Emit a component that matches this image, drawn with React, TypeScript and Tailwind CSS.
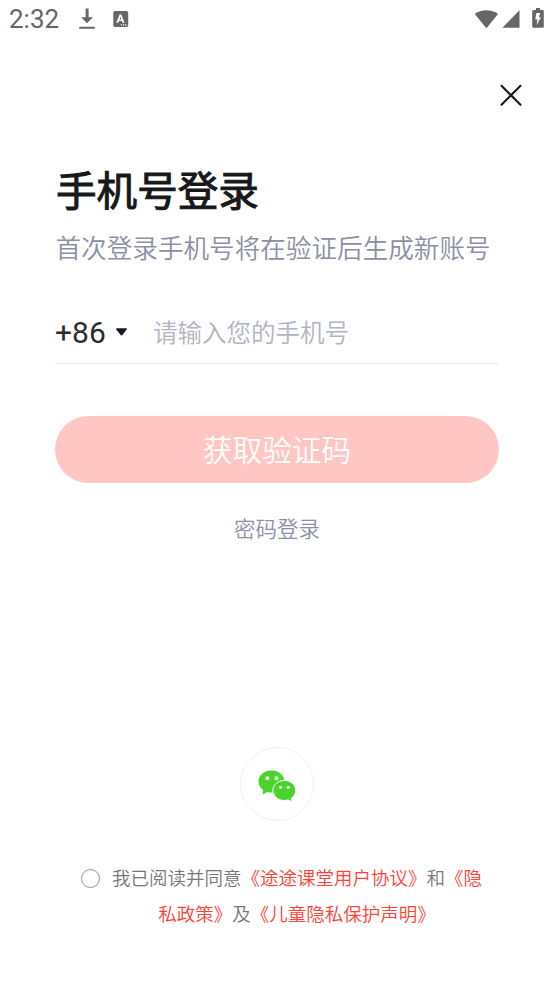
import React from "react";

function StatusBar() {
  return (
    <header className="flex h-[38px] items-center text-[#666666]">
      <span className="ml-[9px] w-[51px] font-[Roboto,sans-serif] text-[26px] leading-[38px] whitespace-nowrap">2:32</span>
      <svg className="ml-[19px] h-[22px] w-[16px]" viewBox="0 0 16 22" fill="currentColor">
        <path d="M6.600.5h3v8.800h4.300L8 15.300 2.100 9.300h4.500zM.2 18.700h15.600v2H.2z" />
      </svg>
      <svg className="ml-[18px] h-[16px] w-[16px]" viewBox="0 0 16 16" fill="currentColor">
        <path
          fillRule="evenodd"
          d="M2 0h11.5a1.7 1.7 0 0 1 1.7 1.7v12.5a1.7 1.7 0 0 1-1.7 1.7H2a1.7 1.7 0 0 1-1.7-1.7V1.700A1.700 1.700 0 0 1 2 0zM6.600 3.500 3.300 11.700h2l.6-1.600h3l.6 1.600h2L8.300 3.500zM6.500 8.500l.95-2.700 1 2.700zM7.800 13.300v1.100H9v-1.100zm2.200 0v1.100h1.200v-1.100zm2.200 0v1.100h1.200v-1.100z"
        />
      </svg>
      <svg className="ml-auto h-[19px] w-[24px]" viewBox="0 0 24 19" fill="currentColor">
        <path d="M.8 3.900C7.500-.9 17.300-.9 24 3.900L12.400 18.200z" />
      </svg>
      <svg className="ml-[4px] h-[18px] w-[18px]" viewBox="0 0 18 18" fill="currentColor">
        <path d="M17.500.3v17.400H.3z" />
      </svg>
      <svg className="mr-[10px] mb-[2px] ml-[12px] h-[20px] w-[12px]" viewBox="0 0 12 20" fill="currentColor">
        <path fillRule="evenodd" d="M4 0h4v2h2.500A1.300 1.300 0 0 1 11.800 3.300v15.200a1.300 1.300 0 0 1-1.300 1.300h-9A1.300 1.300 0 0 1 .2 18.500V3.300A1.300 1.300 0 0 1 1.500 2H4zM4.300 5l-1 6.600h2.200l-.9 5.700L9 9.300H6.900L8.300 5z" />
      </svg>
    </header>
  );
}

function WeChatIcon() {
  return (
    <svg className="mt-[3px] h-[32px] w-[38px]" viewBox="0 0 38 32">
      <path fill="#4bd52c" d="M13.500.5C6.300.5.5 5.400.5 11.500c0 3.500 1.900 6.400 4.700 8.400L4.700 24.500l4.500-2.600c1.400.4 2.800.6 4.300.6 7.200 0 13-4.900 13-11S20.700.5 13.500.5z" />
      <path fill="#4bd52c" stroke="#fff" strokeWidth="1" d="M26.300 10.400c-6.400 0-11.400 4.400-11.400 10s5 10.100 11.400 10.100c1.300 0 2.600-.2 3.700-.6l4.200 2.100-.9-3.600c2.700-1.800 4.400-4.700 4.400-8 0-5.600-5-10-11.400-10z" />
      <g fill="#fff">
        <circle cx="9.400" cy="8.200" r="1.900" />
        <circle cx="18.500" cy="8.200" r="1.900" />
        <circle cx="22.700" cy="17.300" r="1.500" />
        <circle cx="30.200" cy="17.300" r="1.500" />
      </g>
    </svg>
  );
}

export default function App() {
  return (
    <div lang="zh-CN" className="flex h-[984px] w-[554px] flex-col overflow-hidden bg-white font-[Roboto,'Noto_Sans_CJK_SC_DemiLight','Noto_Sans_CJK_SC',sans-serif]">
      <StatusBar />
      <div className="mt-[46px] mr-[32px] flex h-[22px] justify-end">
        <button aria-label="关闭" className="h-[22px] w-[22px]">
          <svg className="h-[22px] w-[22px]" viewBox="0 0 22 22" fill="none" stroke="#15172b" strokeWidth="2.100" strokeLinecap="round">
            <path d="M1.500 1.800l19 19M20.500 1.800l-19 19" />
          </svg>
        </button>
      </div>
      <main className="mt-[55px] flex flex-col pr-[55px] pl-[55px]">
        <h1 className="h-[60px] pl-[1px] font-[Roboto,'Noto_Sans_CJK_SC',sans-serif] text-[40.600px] leading-[62px] font-normal whitespace-nowrap text-[#17181a] [-webkit-text-stroke:1px_#17181a]">手机号登录</h1>
        <p className="mt-[8px] h-[40px] pl-[0.500px] text-[25.600px] leading-[40px] whitespace-nowrap text-[#8c8fa6]">首次登录手机号将在验证后生成新账号</p>
        <div className="mt-[35px] flex h-[60px] items-center border-b border-[#ebecee]">
          <span className="h-[60px] w-[51px] text-[30px] leading-[57px] text-[#2d2d2d]">+86</span>
          <svg className="mb-[3px] ml-[10px] h-[8px] w-[11px]" viewBox="0 0 11 8" fill="#15172b">
            <path d="M.9.200h9.200c.8 0 1.100.8.600 1.400L6.400 7c-.5.600-1.300.600-1.800 0L.3 1.600C-.2 1 .1.200.9.200z" />
          </svg>
          <span className="ml-[26px] text-[24.500px] leading-[60px] whitespace-nowrap text-[#b0b4c0]">请输入您的手机号</span>
        </div>
        <button className="mt-[52px] h-[67px] rounded-full bg-[#ffc6c4] pt-[3px] text-[29.600px] leading-[64px] text-white">获取验证码</button>
        <button className="mt-[32px] h-[30px] text-[21.500px] leading-[30px] text-[#8c8fa6]">密码登录</button>
      </main>
      <div className="mt-[202px] flex justify-center">
        <button aria-label="微信登录" className="flex h-[74px] w-[74px] items-center justify-center rounded-full border border-[#eeeef7]">
          <WeChatIcon />
        </button>
      </div>
      <div className="mt-[38px] ml-[81px] flex items-start">
        <span className="mt-[10px] h-[19px] w-[19px] shrink-0 rounded-full border-[1.500px] border-[#92959f]" />
        <p className="mt-[2px] ml-[12px] text-center text-[18.500px] leading-[36px] whitespace-nowrap text-[#777777]">
          我已阅读并同意<a className="text-[#ff4238]">《途途课堂用户协议》</a>和<a className="text-[#ff4238]">《隐<br />私政策》</a>及<a className="text-[#ff4238]">《儿童隐私保护声明》</a>
        </p>
      </div>
    </div>
  );
}
